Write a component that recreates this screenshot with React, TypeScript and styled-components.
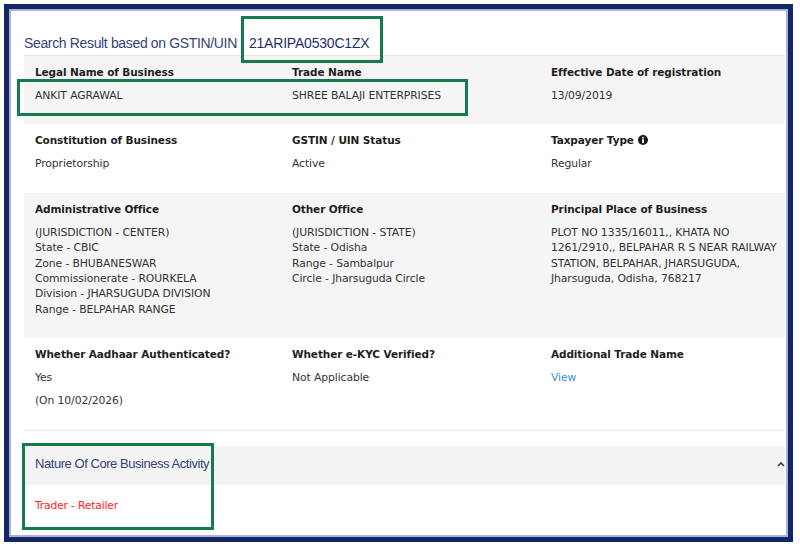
import styled, { createGlobalStyle } from "styled-components";

const GlobalStyle = createGlobalStyle`
  html, body {
    margin: 0;
    padding: 0;
    background: #ffffff;
  }
`;

interface Field {
  label: string;
  lines: string[];
  info?: boolean;
  link?: boolean;
  note?: string;
}

const rows: Field[][] = [
  [
    { label: "Legal Name of Business", lines: ["ANKIT AGRAWAL"] },
    { label: "Trade Name", lines: ["SHREE BALAJI ENTERPRISES"] },
    { label: "Effective Date of registration", lines: ["13/09/2019"] },
  ],
  [
    { label: "Constitution of Business", lines: ["Proprietorship"] },
    { label: "GSTIN / UIN Status", lines: ["Active"] },
    { label: "Taxpayer Type", lines: ["Regular"], info: true },
  ],
  [
    {
      label: "Administrative Office",
      lines: [
        "(JURISDICTION - CENTER)",
        "State - CBIC",
        "Zone - BHUBANESWAR",
        "Commissionerate - ROURKELA",
        "Division - JHARSUGUDA DIVISION",
        "Range - BELPAHAR RANGE",
      ],
    },
    {
      label: "Other Office",
      lines: [
        "(JURISDICTION - STATE)",
        "State - Odisha",
        "Range - Sambalpur",
        "Circle - Jharsuguda Circle",
      ],
    },
    {
      label: "Principal Place of Business",
      lines: [
        "PLOT NO 1335/16011,, KHATA NO",
        "1261/2910,, BELPAHAR R S NEAR RAILWAY",
        "STATION, BELPAHAR, JHARSUGUDA,",
        "Jharsuguda, Odisha, 768217",
      ],
    },
  ],
  [
    {
      label: "Whether Aadhaar Authenticated?",
      lines: ["Yes"],
      note: "(On 10/02/2026)",
    },
    { label: "Whether e-KYC Verified?", lines: ["Not Applicable"] },
    { label: "Additional Trade Name", lines: ["View"], link: true },
  ],
];

const InfoIcon = () => (
  <svg width="10" height="10" viewBox="0 0 10 10">
    <circle cx="5" cy="5" r="5" fill="#1a1a1a" />
    <rect x="4.1" y="4.2" width="1.8" height="3.9" fill="#fff" />
    <circle cx="5" cy="2.7" r="0.95" fill="#fff" />
  </svg>
);

const Caret = () => (
  <svg width="8" height="6" viewBox="0 0 8 6">
    <polyline
      points="1,5 4,2 7,5"
      fill="none"
      stroke="#2c3568"
      strokeWidth="1.6"
    />
  </svg>
);

export default function App() {
  return (
    <>
      <GlobalStyle />
      <Frame>
        <TitleBar>
          Search Result based on GSTIN/UIN
          <Gstin>21ARIPA0530C1ZX</Gstin>
        </TitleBar>

        {rows.map((row, i) => (
          <Row key={i} $shaded={i % 2 === 0} $last={i === rows.length - 1}>
            {i === 0 && <Highlight />}
            {row.map((f) => (
              <Cell key={f.label}>
                <Label>
                  {f.label}
                  {f.info && (
                    <IconWrap>
                      <InfoIcon />
                    </IconWrap>
                  )}
                </Label>
                <Value $link={f.link}>
                  {f.lines.map((l) => (
                    <div key={l}>{l}</div>
                  ))}
                </Value>
                {f.note && <Note>{f.note}</Note>}
              </Cell>
            ))}
          </Row>
        ))}

        <Accordion>
          <AccordionBox />
          <AccordionHeader>
            Nature Of Core Business Activity
            <Caret />
          </AccordionHeader>
          <AccordionBody>Trader - Retailer</AccordionBody>
        </Accordion>
      </Frame>
    </>
  );
}

const Frame = styled.div`
  position: relative;
  box-sizing: border-box;
  margin: 4px 0 0 4px;
  width: 789px;
  height: 538px;
  border: 5px solid #14266a;
  box-shadow: inset 0 0 0 2px #aab3cf;
  background: #fff;
  padding: 0 3px 0 15px;
  overflow: hidden;
`;

const TitleBar = styled.div`
  display: flex;
  align-items: center;
  height: 47px;
  padding-top: 22px;
  padding-bottom: 1px;
  box-sizing: border-box;
  border-bottom: 1px solid #e6e6e6;
  font-family: "Liberation Sans", Arial, sans-serif;
  font-size: 14px;
  line-height: 16px;
  color: #34427a;
  letter-spacing: -0.35px;
`;

const Gstin = styled.span`
  position: relative;
  display: inline-block;
  margin-left: 12px;
  line-height: 16px;
  color: #1f2d6e;
  letter-spacing: -0.2px;

  &::after {
    content: "";
    position: absolute;
    z-index: 2;
    left: -8px;
    top: -19px;
    right: -14px;
    bottom: -12px;
    border: 3px solid #167b4c;
  }
`;

const Row = styled.div<{ $shaded: boolean; $last: boolean }>`
  position: relative;
  display: grid;
  grid-template-columns: 257px 259px 1fr;
  padding: 8px 0 21px 11px;
  background: ${(p) => (p.$shaded ? "#f5f5f5" : "#ffffff")};
  border-bottom: ${(p) => (p.$last ? "1px solid #e6e6e6" : "none")};
`;

const Highlight = styled.div`
  position: absolute;
  left: -7px;
  top: 23px;
  width: 445px;
  height: 31px;
  border: 3px solid #167b4c;
`;

const Cell = styled.div`
  display: flex;
  flex-direction: column;
`;

const Label = styled.div`
  display: flex;
  align-items: center;
  gap: 4px;
  height: 16px;
  font-family: "DejaVu Sans", Verdana, sans-serif;
  font-weight: bold;
  font-size: 10.5px;
  color: #1e1e1e;
  letter-spacing: -0.1px;
`;

const IconWrap = styled.span`
  display: inline-flex;
`;

const Value = styled.div<{ $link?: boolean }>`
  margin-top: 8px;
  font-family: "DejaVu Sans", Verdana, sans-serif;
  font-size: 10.8px;
  line-height: 15.4px;
  color: ${(p) => (p.$link ? "#3b8ed0" : "#333333")};
  letter-spacing: -0.1px;
`;

const Note = styled(Value)`
  margin-top: 7.6px;
`;

const Accordion = styled.div`
  position: relative;
  margin-top: 15px;
`;

const AccordionBox = styled.div`
  position: absolute;
  left: -2px;
  top: -3px;
  width: 186px;
  height: 81px;
  border: 3px solid #167b4c;
  pointer-events: none;
`;

const AccordionHeader = styled.div`
  display: flex;
  align-items: center;
  justify-content: space-between;
  height: 39px;
  padding: 0 0 3px 11px;
  box-sizing: border-box;
  background: #f3f3f3;
  font-family: "Liberation Sans", Arial, sans-serif;
  font-size: 13px;
  color: #34427a;
  letter-spacing: -0.45px;
`;

const AccordionBody = styled.div`
  padding: 13px 0 0 11px;
  font-family: "DejaVu Sans", Verdana, sans-serif;
  font-size: 10.8px;
  line-height: 15px;
  color: #ff2424;
  letter-spacing: -0.2px;
`;
